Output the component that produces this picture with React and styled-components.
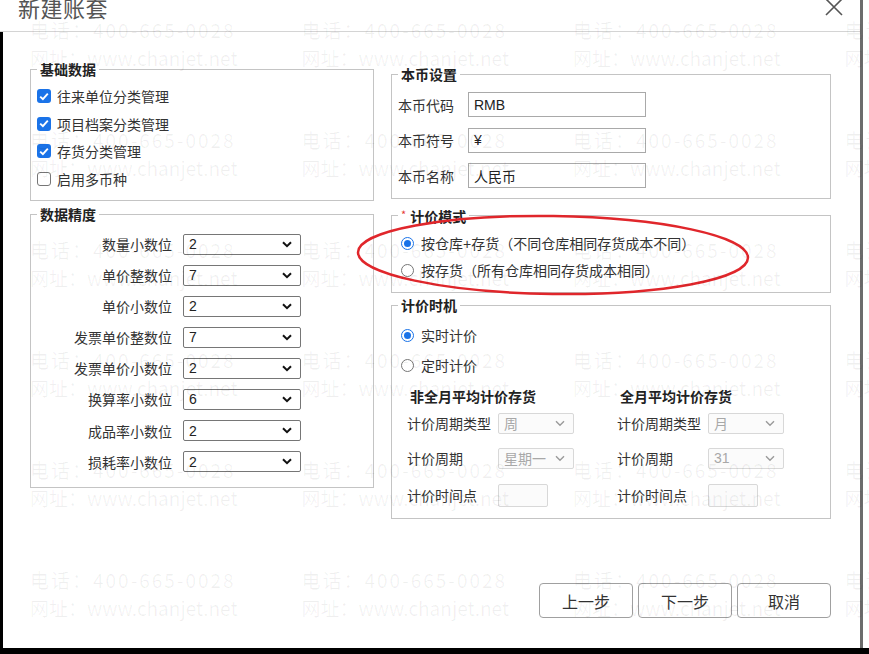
import React from "react";
import styled, { createGlobalStyle } from "styled-components";

const Global = createGlobalStyle`
  html, body { margin: 0; padding: 0; background: #fff; }
  body { font-family: "Liberation Sans", "Noto Sans CJK SC", sans-serif; color: #333; }
  * { box-sizing: border-box; }
`;

const Page = styled.div`
  position: relative;
  width: 869px;
  height: 654px;
  overflow: hidden;
  background: #fff;
  display: grid;
  grid-template-rows: 1fr 6px;
`;

const Top = styled.div`
  display: flex;
  min-height: 0;
`;

const BottomBand = styled.div`
  background: #000;
`;

const Dialog = styled.div`
  width: 860px;
  display: flex;
  flex-direction: column;
`;

const EdgeBar = styled.div`
  width: 3px;
  background: #6c6c6c;
`;

const Header = styled.header`
  height: 32px;
  border-bottom: 1px solid #d4d4d4;
  display: flex;
  justify-content: space-between;
  align-items: flex-start;
  padding: 0 17px 0 18px;
`;

const Title = styled.div`
  font-family: "Noto Sans CJK SC", sans-serif;
  font-size: 22px;
  line-height: 22px;
  margin-top: -4px;
  color: #555;
  letter-spacing: 0.5px;
`;

const CloseIcon = styled.svg`
  width: 18px;
  height: 18px;
  margin-top: -2px;
`;

const Body = styled.div`
  flex: 1;
  border-left: 3px solid #000;
  padding: 28px 29px 0 27px;
  display: flex;
  flex-direction: column;
`;

const Columns = styled.div`
  display: flex;
  gap: 17px;
  align-items: flex-start;
`;

const Col = styled.div`
  width: ${(p) => p.$w}px;
  display: flex;
  flex-direction: column;
  gap: ${(p) => p.$gap || 0}px;
  padding-top: ${(p) => p.$pt || 0}px;
`;

const Group = styled.fieldset`
  margin: ${(p) => p.$mt || 0}px 0 0;
  padding: ${(p) => p.$pt || 0}px 0 0 0;
  border: 1px solid #c4c4c4;
  height: ${(p) => p.$h}px;
  min-width: 0;
`;

const Legend = styled.legend`
  margin-left: 6px;
  padding: 0 3px;
  font-family: "Noto Sans CJK SC", sans-serif;
  font-size: 14px;
  line-height: 18px;
  font-weight: bold;
  color: #222;
`;

const Star = styled.span`
  color: #e53935;
  font-size: 11px;
  font-weight: normal;
  margin-right: 4px;
  vertical-align: 3px;
`;

const Stack = styled.div`
  display: flex;
  flex-direction: column;
  gap: ${(p) => p.$gap}px;
  padding-left: ${(p) => p.$pl || 0}px;
`;

const CheckRow = styled.label`
  display: flex;
  align-items: center;
  gap: 6px;
  height: 20px;
  font-size: 14px;
  color: #333;
`;

const Box = styled.span`
  width: 14px;
  height: 14px;
  border-radius: 3px;
  display: inline-flex;
  align-items: center;
  justify-content: center;
  background: ${(p) => (p.$on ? "#1a73e8" : "#fff")};
  border: ${(p) => (p.$on ? "none" : "1px solid #767676")};
`;

const Radio = styled.span`
  width: 13px;
  height: 13px;
  border-radius: 50%;
  border: 1px solid ${(p) => (p.$on ? "#1a73e8" : "#767676")};
  display: inline-flex;
  align-items: center;
  justify-content: center;
  background: #fff;
  &::after {
    content: "";
    width: 7px;
    height: 7px;
    border-radius: 50%;
    background: ${(p) => (p.$on ? "#1a73e8" : "transparent")};
  }
`;

const RadioRow = styled.label`
  display: flex;
  align-items: center;
  gap: 7px;
  height: 20px;
  font-size: 14px;
  color: #333;
`;

const FormGrid = styled.div`
  display: grid;
  grid-template-columns: ${(p) => p.$cols};
  grid-auto-rows: ${(p) => p.$rowH}px;
  column-gap: ${(p) => p.$cg || 0}px;
  row-gap: ${(p) => p.$rg}px;
  align-items: center;
  padding-left: ${(p) => p.$pl || 0}px;
`;

const Label = styled.span`
  font-size: 14px;
  color: #333;
  text-align: ${(p) => (p.$right ? "right" : "left")};
  white-space: nowrap;
`;

const SelectBox = styled.div`
  width: ${(p) => p.$w}px;
  height: ${(p) => p.$h}px;
  border: 1px solid ${(p) => (p.$disabled ? "#d8d8d8" : "#767676")};
  border-radius: 2px;
  background: ${(p) => (p.$disabled ? "#fbfbfb" : "#fff")};
  display: flex;
  align-items: center;
  justify-content: space-between;
  padding: 0 8px 0 5px;
  font-size: 14px;
  color: ${(p) => (p.$disabled ? "#a8a8a8" : "#222")};
`;

const TextInput = styled.div`
  width: ${(p) => p.$w}px;
  height: ${(p) => p.$h}px;
  border: 1px solid ${(p) => (p.$disabled ? "#d8d8d8" : "#a9a9a9")};
  border-radius: ${(p) => (p.$disabled ? 2 : 0)}px;
  background: ${(p) => (p.$disabled ? "#fbfbfb" : "#fff")};
  display: flex;
  align-items: center;
  padding: 0 5px;
  font-size: 14px;
  color: #222;
`;

const SubGrid = styled.div`
  display: grid;
  grid-template-columns: 210px 210px;
  padding-left: 15px;
  margin-top: 11px;
`;

const SubCol = styled.div`
  display: flex;
  flex-direction: column;
`;

const SubHead = styled.div`
  height: 20px;
  line-height: 20px;
  margin-left: 3px;
  font-family: "Noto Sans CJK SC", sans-serif;
  font-size: 14px;
  font-weight: bold;
  color: #222;
`;

const PRow = styled.div`
  display: grid;
  grid-template-columns: 91px auto;
  align-items: center;
  height: 24px;
  margin-top: ${(p) => p.$mt}px;
`;

const Footer = styled.div`
  margin-top: 64px;
  display: flex;
  justify-content: flex-end;
  gap: 5px;
`;

const Button = styled.button`
  width: 94px;
  height: 35px;
  border: 1px solid #a0a0a0;
  border-radius: 4px;
  background: #fff;
  font-family: "Noto Sans CJK SC", sans-serif;
  font-size: 16px;
  color: #333;
  padding: 0;
`;

const Watermark = styled.div`
  position: absolute;
  left: 30px;
  top: 16px;
  display: grid;
  grid-template-columns: repeat(4, 271.5px);
  grid-auto-rows: 110px;
  pointer-events: none;
  z-index: 5;
`;

const Mark = styled.div`
  font-family: "Noto Sans CJK SC", sans-serif;
  font-size: 19px;
  line-height: 28px;
  letter-spacing: ${(p) => p.$ls}px;
  color: rgba(0, 0, 0, 0.06);
  white-space: nowrap;
`;

const Ellipse = styled.svg`
  position: absolute;
  left: 352px;
  top: 210px;
  width: 402px;
  height: 90px;
  pointer-events: none;
  z-index: 4;
`;

const Chevron = ({ disabled }) => (
  <svg width="10" height="7" viewBox="0 0 10 7">
    <path
      d="M1 1.2 L5 5.2 L9 1.2"
      fill="none"
      stroke={disabled ? "#9a9a9a" : "#111"}
      strokeWidth={disabled ? 1.4 : 2}
    />
  </svg>
);

const Check = () => (
  <svg width="10" height="9" viewBox="0 0 10 9">
    <path d="M1.2 4.6 L3.9 7.2 L8.8 1.6" fill="none" stroke="#fff" strokeWidth="1.9" />
  </svg>
);

const Select = ({ value, w, h, disabled }) => (
  <SelectBox $w={w} $h={h} $disabled={disabled}>
    <span>{value}</span>
    <Chevron disabled={disabled} />
  </SelectBox>
);

const precision = [
  ["数量小数位", "2"],
  ["单价整数位", "7"],
  ["单价小数位", "2"],
  ["发票单价整数位", "7"],
  ["发票单价小数位", "2"],
  ["换算率小数位", "6"],
  ["成品率小数位", "2"],
  ["损耗率小数位", "2"],
];

const basics = [
  ["往来单位分类管理", true],
  ["项目档案分类管理", true],
  ["存货分类管理", true],
  ["启用多币种", false],
];

export default function App() {
  const marks = Array.from({ length: 24 });
  return (
    <>
      <Global />
      <Page>
        <Top>
          <Dialog>
            <Header>
              <Title>新建账套</Title>
              <CloseIcon viewBox="0 0 18 18">
                <path d="M1 1 L17 17 M17 1 L1 17" stroke="#555" strokeWidth="1.6" />
              </CloseIcon>
            </Header>
            <Body>
              <Columns>
                <Col $w={344} $gap={4}>
                  <Group $h={141} $pt={8}>
                    <Legend>基础数据</Legend>
                    <Stack $gap={7.5} $pl={6}>
                      {basics.map(([t, on]) => (
                        <CheckRow key={t}>
                          <Box $on={on}>{on && <Check />}</Box>
                          {t}
                        </CheckRow>
                      ))}
                    </Stack>
                  </Group>
                  <Group $h={283} $pt={10}>
                    <Legend>数据精度</Legend>
                    <FormGrid $cols="141px 118px" $rowH={22} $cg={11} $rg={9.1}>
                      {precision.map(([l, v]) => (
                        <React.Fragment key={l}>
                          <Label $right>{l}</Label>
                          <Select value={v} w={118} h={21} />
                        </React.Fragment>
                      ))}
                    </FormGrid>
                  </Group>
                </Col>
                <Col $w={440} $pt={5}>
                  <Group $h={134} $pt={9}>
                    <Legend>本币设置</Legend>
                    <FormGrid $cols="70px 178px" $rowH={25} $rg={10.5} $pl={6}>
                      <Label>本币代码</Label>
                      <TextInput $w={178} $h={25}>RMB</TextInput>
                      <Label>本币符号</Label>
                      <TextInput $w={178} $h={25}>¥</TextInput>
                      <Label>本币名称</Label>
                      <TextInput $w={178} $h={25}>人民币</TextInput>
                    </FormGrid>
                  </Group>
                  <Group $h={88} $mt={6} $pt={8}>
                    <Legend>
                      <Star>*</Star>计价模式
                    </Legend>
                    <Stack $gap={7} $pl={9}>
                      <RadioRow>
                        <Radio $on />
                        按仓库+存货（不同仓库相同存货成本不同）
                      </RadioRow>
                      <RadioRow>
                        <Radio />
                        按存货（所有仓库相同存货成本相同）
                      </RadioRow>
                    </Stack>
                  </Group>
                  <Group $h={223} $mt={3} $pt={11}>
                    <Legend>计价时机</Legend>
                    <Stack $gap={10} $pl={9}>
                      <RadioRow>
                        <Radio $on />
                        实时计价
                      </RadioRow>
                      <RadioRow>
                        <Radio />
                        定时计价
                      </RadioRow>
                    </Stack>
                    <SubGrid>
                      <SubCol>
                        <SubHead>非全月平均计价存货</SubHead>
                        <PRow $mt={5}>
                          <Label>计价周期类型</Label>
                          <Select value="周" w={76} h={21} disabled />
                        </PRow>
                        <PRow $mt={11}>
                          <Label>计价周期</Label>
                          <Select value="星期一" w={76} h={21} disabled />
                        </PRow>
                        <PRow $mt={13}>
                          <Label>计价时间点</Label>
                          <TextInput $w={50} $h={23} $disabled />
                        </PRow>
                      </SubCol>
                      <SubCol>
                        <SubHead>全月平均计价存货</SubHead>
                        <PRow $mt={5}>
                          <Label>计价周期类型</Label>
                          <Select value="月" w={76} h={21} disabled />
                        </PRow>
                        <PRow $mt={11}>
                          <Label>计价周期</Label>
                          <Select value="31" w={76} h={21} disabled />
                        </PRow>
                        <PRow $mt={13}>
                          <Label>计价时间点</Label>
                          <TextInput $w={50} $h={23} $disabled />
                        </PRow>
                      </SubCol>
                    </SubGrid>
                  </Group>
                </Col>
              </Columns>
              <Footer>
                <Button>上一步</Button>
                <Button>下一步</Button>
                <Button>取消</Button>
              </Footer>
            </Body>
          </Dialog>
          <EdgeBar />
        </Top>
        <BottomBand />
        <Ellipse viewBox="0 0 402 90">
          <ellipse
            cx="201"
            cy="45"
            rx="195"
            ry="39"
            fill="none"
            stroke="#e0262b"
            strokeWidth="2.5"
            transform="rotate(0.8 201 45)"
          />
        </Ellipse>
        <Watermark>
          {marks.map((_, i) => (
            <div key={i}>
              <Mark $ls={2}>电话：400-665-0028</Mark>
              <Mark $ls={0}>网址：www.chanjet.net</Mark>
            </div>
          ))}
        </Watermark>
      </Page>
    </>
  );
}
